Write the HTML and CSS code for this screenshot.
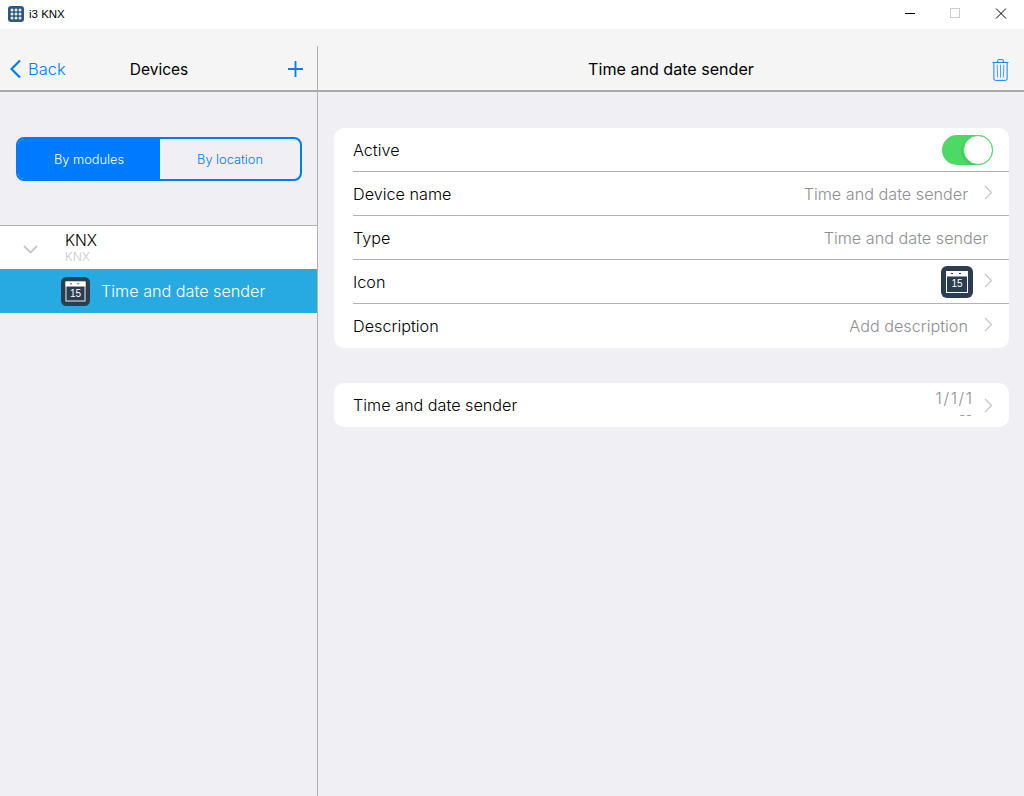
FILE: index.html
```html
<!DOCTYPE html>
<html lang="en">
<head>
<meta charset="utf-8">
<title>i3 KNX</title>
<link rel="stylesheet" href="styles.css">
</head>
<body>
<svg class="defs" width="0" height="0" aria-hidden="true">
  <symbol id="cal" viewBox="0 0 32 32">
    <rect width="32" height="32" rx="6" fill="#2b3e51"/>
    <rect x="5.500" y="5.500" width="21" height="21" fill="none" stroke="#fff" stroke-width="1"/>
    <rect x="5" y="5" width="22" height="5.500" fill="#fff"/>
    <rect x="10" y="7" width="2" height="1" fill="#2b3e51"/>
    <rect x="18" y="7" width="2" height="1" fill="#2b3e51"/>
  </symbol>
  <symbol id="chev" viewBox="0 0 9 15">
    <path d="M1 1l6.500 6.500L1 14" fill="none" stroke="#c7c7cc" stroke-width="1.300"/>
  </symbol>
</svg>
<div class="titlebar">
  <div class="app">
    <svg class="app-icon" viewBox="0 0 16 16">
      <rect width="16" height="16" rx="3" fill="#2d5878"/>
      <g fill="#dfe8ef">
        <circle cx="4" cy="4" r="1.500"/><circle cx="8" cy="4" r="1.500"/><circle cx="12" cy="4" r="1.500"/>
        <circle cx="4" cy="8" r="1.500"/><circle cx="8" cy="8" r="1.500"/><circle cx="12" cy="8" r="1.500"/>
        <circle cx="4" cy="12" r="1.500"/><circle cx="8" cy="12" r="1.500"/><circle cx="12" cy="12" r="1.500"/>
      </g>
    </svg>
    <span class="app-name">i3 KNX</span>
  </div>
  <div class="win-buttons">
    <svg class="win-btn" viewBox="0 0 46 28"><path d="M19 13.500h10" stroke="#000" fill="none"/></svg>
    <svg class="win-btn" viewBox="0 0 46 28"><rect x="18.500" y="8.500" width="9" height="9" stroke="#ccc" fill="none"/></svg>
    <svg class="win-btn" viewBox="0 0 46 28"><path d="M18 8.500l10 10M28 8.500l-10 10" stroke="#000" fill="none"/></svg>
  </div>
</div>
<div class="main">
  <aside class="left">
    <header class="bar left-bar">
      <div class="back">
        <svg class="back-icon" viewBox="0 0 13 20"><path d="M11 1.500L2.500 10l8.500 8.500" fill="none" stroke="#007aff" stroke-width="2.200"/></svg>
        <span>Back</span>
      </div>
      <div class="bar-title">Devices</div>
      <svg class="plus" viewBox="0 0 15 16"><path d="M7.500 0v16M0 8h15" stroke="#007aff" stroke-width="1.800" fill="none"/></svg>
    </header>
    <div class="left-body">
      <div class="segment">
        <div class="seg seg-on">By modules</div>
        <div class="seg">By location</div>
      </div>
      <div class="tree">
        <div class="group">
          <svg class="down" viewBox="0 0 15 9"><path d="M1 1l6.500 6.500L14 1" fill="none" stroke="#c7c7cc" stroke-width="1.800"/></svg>
          <div class="group-text">
            <div class="group-name">KNX</div>
            <div class="group-sub">KNX</div>
          </div>
        </div>
        <div class="device">
          <div class="cal small"><svg class="cal-svg"><use href="#cal"/></svg><span class="cal-num">15</span></div>
          <span>Time and date sender</span>
        </div>
      </div>
    </div>
  </aside>
  <section class="right">
    <header class="bar right-bar">
      <div class="bar-title">Time and date sender</div>
      <svg class="trash" viewBox="0 0 18 23">
        <g fill="none" stroke="#007aff">
          <path d="M.5 3.500h17M6 3.500V1.500a1 1 0 0 1 1-1h4a1 1 0 0 1 1 1v2"/>
          <path d="M2 3.500V21a1.500 1.500 0 0 0 1.500 1.500h11A1.500 1.500 0 0 0 16 21V3.500"/>
          <path d="M5.500 6l.5 13.500M9 6v13.500M12.500 6L12 19.500" stroke-opacity=".75"/>
        </g>
      </svg>
    </header>
    <div class="content">
      <div class="card">
        <div class="row"><span class="label">Active</span><div class="toggle"><div class="knob"></div></div></div>
        <div class="row"><span class="label">Device name</span><span class="value">Time and date sender</span><svg class="chev"><use href="#chev"/></svg></div>
        <div class="row"><span class="label">Type</span><span class="value value-end">Time and date sender</span></div>
        <div class="row"><span class="label">Icon</span><div class="cal"><svg class="cal-svg"><use href="#cal"/></svg><span class="cal-num">15</span></div><svg class="chev chev-near"><use href="#chev"/></svg></div>
        <div class="row row-last"><span class="label">Description</span><span class="value">Add description</span><svg class="chev"><use href="#chev"/></svg></div>
      </div>
      <div class="card">
        <div class="row row-solo"><span class="label">Time and date sender</span><div class="addr"><div class="addr-top">1/1/1</div><div class="addr-sub">--</div></div><svg class="chev chev-low"><use href="#chev"/></svg></div>
      </div>
    </div>
  </section>
</div>
</body>
</html>
```

FILE: styles.css
```css
* { box-sizing: border-box; }
html, body { margin: 0; height: 100%; }
body {
  width: 1024px;
  height: 796px;
  overflow: hidden;
  display: flex;
  flex-direction: column;
  background: #efeff4;
  font-family: Inter, "Liberation Sans", sans-serif;
  font-weight: 300;
  color: #000;
}
.defs { position: absolute; }
.titlebar {
  height: 29px;
  flex: none;
  background: #fff;
  display: flex;
  justify-content: space-between;
}
.app { display: flex; align-items: center; padding: 0 0 2px 8px; gap: 5px; }
.app-icon { width: 16px; height: 16px; }
.app-name { font: 400 11.500px "Liberation Sans", sans-serif; }
.win-buttons { display: flex; }
.win-btn { width: 46px; height: 28px; display: block; }
.main { flex: 1; display: flex; min-height: 0; }
.left { width: 318px; flex: none; display: flex; flex-direction: column; }
.left-body { flex: 1; border-right: 1px solid #b2b2b2; display: flex; flex-direction: column; }
.right { flex: 1; min-width: 0; display: flex; flex-direction: column; }
.bar {
  height: 63px;
  flex: none;
  background: #f5f5f5;
  border-bottom: 2px solid #a9a9a9;
  display: flex;
  align-items: center;
  padding-top: 19px;
  position: relative;
}
.left-bar { justify-content: center; }
.left-bar::after {
  content: "";
  position: absolute;
  right: 0;
  top: 17px;
  bottom: -2px;
  width: 1px;
  background: #b2b2b2;
}
.left-bar .bar-title { font-weight: 400; font-size: 15.500px; }
.back { position: absolute; left: 9px; top: 30px; display: flex; align-items: center; gap: 6px; color: #007aff; font-size: 16.500px; height: 20px; }
.back-icon { width: 13px; height: 20px; }
.plus { position: absolute; right: 15px; top: 32px; width: 15px; height: 16px; }
.right-bar { justify-content: center; }
.right-bar .bar-title { font-weight: 400; font-size: 16.100px; }
.trash { position: absolute; right: 15px; top: 30px; width: 17px; height: 22px; }
.segment {
  margin: 45px 15px 0 16px;
  height: 44px;
  flex: none;
  display: flex;
  border: 2px solid #007aff;
  border-radius: 8px;
  overflow: hidden;
  font-size: 12.800px;
  font-weight: 300;
  color: #007aff;
}
.seg { flex: 1; display: flex; align-items: center; justify-content: center; }
.seg-on { background: #007aff; color: #fff; flex: 0 0 142px; }
.tree { margin-top: 44px; border-top: 1px solid #b2b2b2; }
.group { height: 43px; background: #fff; display: flex; align-items: center; }
.down { width: 15px; height: 9px; margin: 3px 0 0 23px; }
.group-text { margin-left: 27px; }
.group-name { font-size: 15.500px; line-height: 17px; }
.group-sub { font-size: 12px; line-height: 12px; margin-top: 2px; color: #c7c7cc; }
.device { height: 44px; background: #27a9e1; color: #fff; display: flex; align-items: center; padding-left: 61px; gap: 11px; font-size: 16.200px; }
.cal { position: relative; width: 32px; height: 32px; flex: none; color: #fff; }
.cal.small { width: 29px; height: 29px; }
.cal-svg { width: 100%; height: 100%; display: block; }
.cal-num { position: absolute; left: 0; right: 0; top: 40%; text-align: center; font: 400 10px/12px "Liberation Sans", sans-serif; }
.content { padding: 36px 15px 0 16px; display: flex; flex-direction: column; gap: 35px; }
.card { background: #fff; border-radius: 10px; overflow: hidden; }
.row { height: 44px; margin-left: 19px; padding-right: 16px; display: flex; align-items: center; border-top: 1px solid #b2b2b2; font-size: 16.200px; }
.row:first-child { border-top: 0; height: 43px; }
.row.row-last { height: 45px; }
.row.row-solo { height: 44px; }
.label { flex: 1; }
.value { color: #8e8e93; margin-right: 1px; }
.value-end { padding-right: 4px; }
.chev { width: 9px; height: 15px; margin-left: 15px; margin-top: -3px; flex: none; }
.chev-near { margin-left: 11px; }
.chev-low { margin-top: 0; margin-left: 11px; }
.toggle { width: 51px; height: 30px; margin-top: 1px; background: #4cd964; border-radius: 15px; position: relative; flex: none; }
.knob { position: absolute; right: 0; top: 0; width: 30px; height: 30px; background: #fff; border-radius: 50%; border: 1px solid #4cd964; box-shadow: -1px 1px 2px rgba(0, 0, 0, .12); }
.addr { text-align: right; color: #8e8e93; }
.addr-top { font-size: 16px; line-height: 16px; letter-spacing: 1.600px; margin-right: -.600px; }
.addr-sub { font-size: 13px; line-height: 12px; letter-spacing: 1px; margin-top: 3px; }
```
